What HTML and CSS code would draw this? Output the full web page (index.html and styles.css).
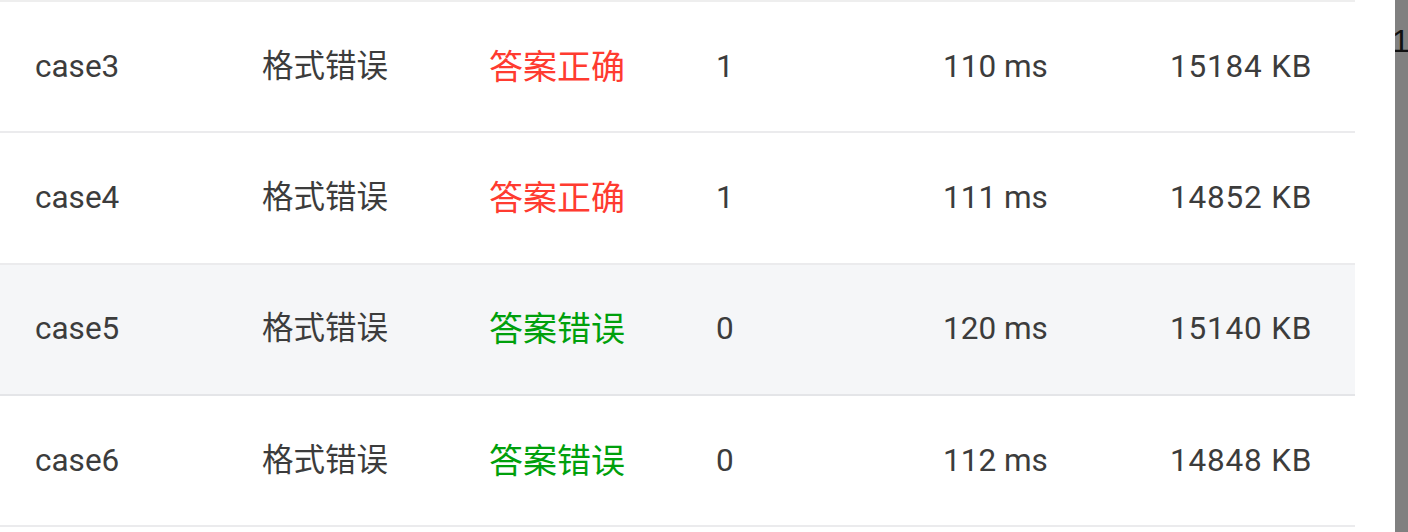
FILE: index.html
```html
<!DOCTYPE html>
<html lang="zh-CN">
<head>
<meta charset="utf-8">
<link rel="stylesheet" href="styles.css">
</head>
<body>
<div class="page">
  <div class="table">
    <div class="row">
      <div class="cell">case3</div>
      <div class="cell">格式错误</div>
      <div class="cell status ok">答案正确</div>
      <div class="cell">1</div>
      <div class="cell">110 ms</div>
      <div class="cell mem">15184 KB</div>
    </div>
    <div class="row">
      <div class="cell">case4</div>
      <div class="cell">格式错误</div>
      <div class="cell status ok">答案正确</div>
      <div class="cell">1</div>
      <div class="cell">111 ms</div>
      <div class="cell mem">14852 KB</div>
    </div>
    <div class="row hover">
      <div class="cell">case5</div>
      <div class="cell">格式错误</div>
      <div class="cell status wrong">答案错误</div>
      <div class="cell">0</div>
      <div class="cell">120 ms</div>
      <div class="cell mem">15140 KB</div>
    </div>
    <div class="row">
      <div class="cell">case6</div>
      <div class="cell">格式错误</div>
      <div class="cell status wrong">答案错误</div>
      <div class="cell">0</div>
      <div class="cell">112 ms</div>
      <div class="cell mem">14848 KB</div>
    </div>
  </div>
  <div class="spacer"></div>
  <div class="side"><span class="side-text">1E</span></div>
</div>
</body>
</html>
```

FILE: styles.css
```css
html, body {
  margin: 0;
  padding: 0;
  background: #ffffff;
}
body {
  font-family: Roboto, "Noto Sans CJK SC", sans-serif;
  color: #3c3c3c;
  overflow: hidden;
}
.page {
  display: flex;
  width: 1408px;
  height: 532px;
}
.table {
  width: 1355px;
  flex: none;
  border-top: 2px solid #eeeeee;
}
.row {
  display: grid;
  grid-template-columns: 227px 227px 227px 227px 227px 220px;
  height: 129.33px;
  align-items: center;
  border-bottom: 2px solid #ebebed;
}
.row.hover {
  background: #f5f6f8;
  border-bottom-color: #e4e5e8;
}
.cell {
  padding-left: 35px;
  font-size: 31.5px;
  line-height: 40px;
  white-space: nowrap;
}
.status {
  font-size: 34px;
}
.mem {
  letter-spacing: 0.8px;
}
.ok {
  color: #ff3b30;
}
.wrong {
  color: #00a00c;
}
.spacer {
  width: 40px;
  flex: none;
}
.side {
  flex: 1;
  background: #808080;
  padding-top: 21px;
  overflow: hidden;
}
.side-text {
  display: block;
  margin-left: -3px;
  font-family: "Liberation Sans", sans-serif;
  font-size: 32px;
  line-height: 40px;
  letter-spacing: -2px;
  color: #111111;
  white-space: nowrap;
}
```
